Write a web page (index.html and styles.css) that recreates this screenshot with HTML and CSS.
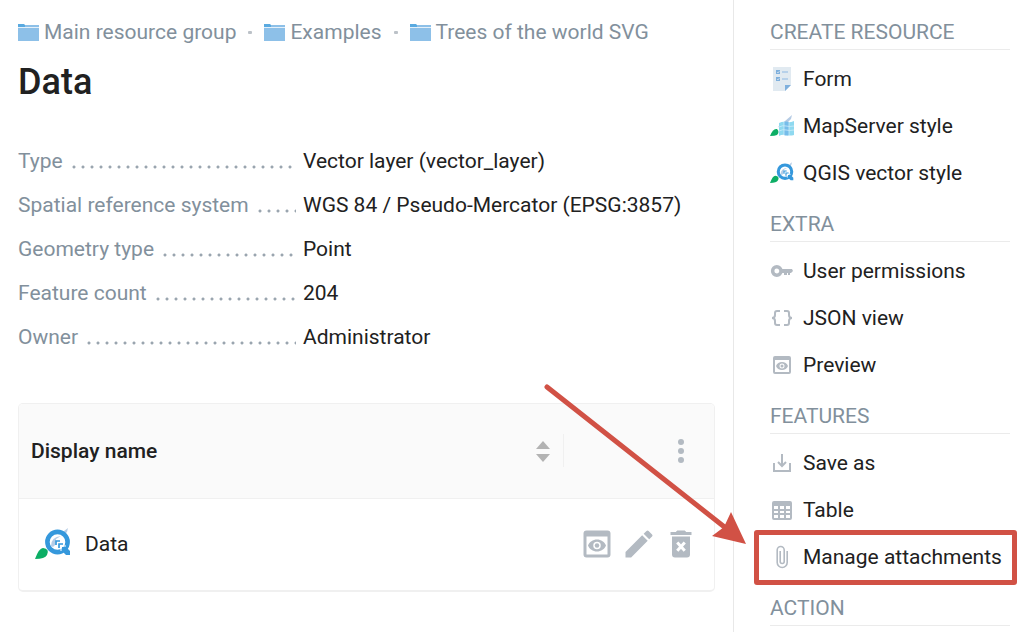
FILE: index.html
```html
<!DOCTYPE html>
<html lang="en">
<head>
<meta charset="utf-8">
<title>Data</title>
<link rel="stylesheet" href="styles.css">
</head>
<body>
<svg class="defs" aria-hidden="true">
  <symbol id="folder" viewBox="0 0 21 19">
    <path fill="#5aaae0" d="M0 1h6l1 1v3H0z"/>
    <path fill="#8dc0e8" d="M7 2h14v16H0V4h7z"/>
    <path fill="#e4f0fa" d="M0 4h21v1H0z"/>
  </symbol>
  <symbol id="form" viewBox="0 0 24 24">
    <path fill="#e1eaf1" d="M3 0h18v18l-6 6H3z"/>
    <path fill="#7fb0dd" d="M15 18h6l-6 6zM6 3h4v4H6zM6 10h4v4H6z"/>
    <path fill="#b7d1ea" d="M12 4h6v2h-6zM12 11h6v2h-6z"/>
    <path fill="none" stroke="#e1eaf1" stroke-width=".7" d="M7 5l1 1 1.500-2M7 12l1 1 1.500-2"/>
  </symbol>
  <symbol id="mapserver" viewBox="0 0 24 24">
    <path fill="#b5cbe4" d="M22 1l-1 4-9 9-4-1z"/>
    <path fill="#8fd9f0" d="M9 9q4-2 7-1 4 1 8-1v14q-4 1-8 0-4-1-7 1z"/>
    <path fill="#76bdea" d="M14 8q2-1 5 0v13q-3 1-5 0z"/>
    <path fill="none" stroke="#d5effa" stroke-width=".7" d="M14 8v13M19 8v14M9 13q4-2 7-1t8 0M9 17q4-2 7-1t8 0"/>
    <path fill="#0cae65" d="M0 22q3-8 7-7 3 3 0 6-2 1-7 1z"/>
  </symbol>
  <symbol id="qgis" viewBox="0 0 36 32">
    <path fill="#b7cde6" d="M29 3l4-3-1 4-2 2zM16 18q0-9 10-10l-5 3-1 6-2 2z"/>
    <circle cx="22.500" cy="14" r="10.100" fill="none" stroke="#3598dc" stroke-width="4.600"/>
    <path fill="none" stroke="#fff" stroke-width="1" d="M26 23v-5h5"/>
    <path fill="#3598dc" d="M27 19h4l4 4v4h-4l-4-4z"/>
    <path fill="none" stroke="#3598dc" stroke-width="1.700" d="M21 17v-4h4M24 20v-4h4"/>
    <path fill="#0cae65" d="M0 31q4-11 8-11 7 1 4 7-2 4-12 4z"/>
  </symbol>
  <symbol id="key" viewBox="0 0 24 24">
    <path fill="none" stroke="currentColor" stroke-width="3.500" d="M11 12a4.200 4.200 0 1 1-8.400 0a4.200 4.200 0 1 1 8.400 0z"/>
    <path fill="currentColor" d="M11 10h11l1 2-2 2h-1v2h-2v-2h-1v2h-3v-2h-3z"/>
  </symbol>
  <symbol id="braces" viewBox="0 0 24 24">
    <path fill="none" stroke="currentColor" stroke-width="2" d="M10 5H7Q5 5 5 7v2q0 3-3 3 3 0 3 3v2q0 2 2 2h3M14 5h3q2 0 2 2v2q0 3 3 3-3 0-3 3v2q0 2-2 2h-3"/>
  </symbol>
  <symbol id="preview" viewBox="0 0 24 24">
    <path fill="currentColor" fill-rule="evenodd" d="M19 3H5a2 2 0 0 0-2 2v14a2 2 0 0 0 2 2h14a2 2 0 0 0 2-2V5a2 2 0 0 0-2-2zm0 16H5V7h14z"/>
    <path fill="currentColor" fill-rule="evenodd" d="M12 9c-2.700 0-5.100 1.600-6 4 .9 2.400 3.300 4 6 4s5.100-1.600 6-4c-.9-2.400-3.300-4-6-4zm0 1.500a2.500 2.500 0 1 1 0 5 2.500 2.500 0 0 1 0-5z"/>
    <circle cx="12" cy="13" r="1.500" fill="currentColor"/>
  </symbol>
  <symbol id="save" viewBox="0 0 24 24">
    <path fill="none" stroke="currentColor" stroke-width="2" d="M4 12v8h16v-8M12 3v12M8 11l4 4 4-4"/>
  </symbol>
  <symbol id="table" viewBox="0 0 24 24">
    <path fill="currentColor" fill-rule="evenodd" d="M4 3h16q2 0 2 2v15q0 2-2 2H4q-2 0-2-2V5q0-2 2-2zM4 8v3h4V8zM10 8v3h4V8zM16 8v3h4V8zM4 13v2h4v-2zM10 13v2h4v-2zM16 13v2h4v-2zM4 17v3h4v-3zM10 17v3h4v-3zM16 17v3h4v-3z"/>
  </symbol>
  <symbol id="clip" viewBox="0 0 24 24">
    <path fill="none" stroke="currentColor" stroke-width="1.600" d="M17.200 6v11.500a5 5 0 0 1-10 0V5a3.500 3.500 0 0 1 7 0v11.500a2 2 0 0 1-4 0V6"/>
  </symbol>
  <symbol id="pencil" viewBox="0 0 24 24">
    <path fill="currentColor" d="M3 17.250V21h3.750L17.800 9.900l-3.700-3.700zM20.700 7a1 1 0 0 0 0-1.400l-2.300-2.300a1 1 0 0 0-1.400 0l-1.900 1.900 3.700 3.700z"/>
  </symbol>
  <symbol id="trash" viewBox="0 0 24 24">
    <path fill="currentColor" d="M6 19a2 2 0 0 0 2 2h8a2 2 0 0 0 2-2V7H6zM15.500 4l-1-1h-5l-1 1H5v2h14V4z"/>
    <path stroke="#fff" stroke-width="2" d="M9.500 11l5 5.500M14.500 11l-5 5.500"/>
  </symbol>
</svg>

<div class="page">
  <main class="content">
    <nav class="crumbs" aria-label="Breadcrumb">
      <a class="crumb" href="#"><svg class="folder"><use href="#folder"/></svg>Main resource group</a>
      <span class="dot"></span>
      <a class="crumb" href="#"><svg class="folder"><use href="#folder"/></svg>Examples</a>
      <span class="dot"></span>
      <a class="crumb" href="#"><svg class="folder"><use href="#folder"/></svg>Trees of the world SVG</a>
    </nav>
    <h1 class="title">Data</h1>

    <dl class="facts">
      <div class="fact"><dt class="label">Type</dt><dd class="value">Vector layer (vector_layer)</dd></div>
      <div class="fact"><dt class="label">Spatial reference system</dt><dd class="value">WGS 84 / Pseudo-Mercator (EPSG:3857)</dd></div>
      <div class="fact"><dt class="label">Geometry type</dt><dd class="value">Point</dd></div>
      <div class="fact"><dt class="label">Feature count</dt><dd class="value">204</dd></div>
      <div class="fact"><dt class="label">Owner</dt><dd class="value">Administrator</dd></div>
    </dl>

    <div class="card">
      <table class="children">
        <thead>
          <tr>
            <th class="name-head" scope="col">
              <div class="sorter">Display name
                <button class="icon-button" type="button" aria-label="Sort">
                  <svg class="sort-icon" viewBox="0 0 14 22"><path fill="#b3b3b3" d="M7 1l7 8H0zM7 22l7-8H0z"/></svg>
                </button>
              </div>
            </th>
            <th class="menu-head" scope="col">
              <button class="icon-button" type="button" aria-label="More">
                <svg class="more-icon" viewBox="0 0 32 32"><g fill="currentColor"><circle cx="16" cy="7" r="3"/><circle cx="16" cy="16" r="3"/><circle cx="16" cy="25" r="3"/></g></svg>
              </button>
            </th>
          </tr>
        </thead>
        <tbody>
          <tr>
            <td class="name-cell"><a class="resource" href="#"><svg class="resource-icon"><use href="#qgis"/></svg>Data</a></td>
            <td class="action-cell">
              <div class="actions">
                <a class="action" href="#" aria-label="Preview"><svg class="action-icon"><use href="#preview"/></svg></a>
                <a class="action" href="#" aria-label="Update"><svg class="action-icon"><use href="#pencil"/></svg></a>
                <a class="action" href="#" aria-label="Delete"><svg class="action-icon"><use href="#trash"/></svg></a>
              </div>
            </td>
          </tr>
        </tbody>
      </table>
    </div>
  </main>

  <aside class="sidebar">
    <h2 class="group">CREATE RESOURCE</h2>
    <ul class="menu">
      <li><a class="item" href="#"><svg class="item-icon"><use href="#form"/></svg>Form</a></li>
      <li><a class="item" href="#"><svg class="item-icon"><use href="#mapserver"/></svg>MapServer style</a></li>
      <li><a class="item" href="#"><svg class="item-icon"><use href="#qgis"/></svg>QGIS vector style</a></li>
    </ul>
    <h2 class="group">EXTRA</h2>
    <ul class="menu">
      <li><a class="item" href="#"><svg class="item-icon"><use href="#key"/></svg>User permissions</a></li>
      <li><a class="item" href="#"><svg class="item-icon"><use href="#braces"/></svg>JSON view</a></li>
      <li><a class="item" href="#"><svg class="item-icon"><use href="#preview"/></svg>Preview</a></li>
    </ul>
    <h2 class="group">FEATURES</h2>
    <ul class="menu">
      <li><a class="item" href="#"><svg class="item-icon"><use href="#save"/></svg>Save as</a></li>
      <li><a class="item" href="#"><svg class="item-icon"><use href="#table"/></svg>Table</a></li>
      <li class="marked">
        <a class="item" href="#"><svg class="item-icon"><use href="#clip"/></svg>Manage attachments</a>
        <svg class="arrow" viewBox="0 0 204 162" aria-hidden="true">
          <path stroke="#d15145" stroke-width="5" stroke-linecap="round" d="M4 3l180 142"/>
          <path fill="#d15145" d="M203 160l-34-8 12-9 7-15z"/>
        </svg>
      </li>
    </ul>
    <h2 class="group">ACTION</h2>
  </aside>
</div>
</body>
</html>
```
FILE: styles.css
```css
* {
  box-sizing: border-box;
}

body {
  margin: 0;
  background: #fff;
  color: #212121;
  font-family: Roboto, "Noto Sans", sans-serif;
  font-size: 21px;
  line-height: 26px;
}

a {
  color: inherit;
  text-decoration: none;
}

.defs {
  display: none;
}

.page {
  display: flex;
  min-height: 100vh;
}

.content {
  flex: 1;
  min-width: 0;
  padding: 19px 18px;
}

.crumbs {
  display: flex;
  align-items: center;
  color: #82909c;
}

.crumb {
  display: flex;
  align-items: center;
  gap: 5px;
  white-space: nowrap;
}

.folder {
  width: 21px;
  height: 19px;
}

.dot {
  width: 4px;
  height: 3px;
  margin: 0 12px;
  border-radius: 1px;
  background: #bcc2c8;
}

.title {
  margin: 13px 0 0;
  font-size: 36px;
  font-weight: 500;
  line-height: 48px;
}

.facts {
  display: grid;
  gap: 18px;
  margin: 42px 0 0;
}

.fact {
  display: flex;
}

.label {
  display: flex;
  flex: none;
  width: 278px;
  color: #82909c;
}

.label::after {
  content: "";
  flex: 1;
  margin-left: 6px;
  background: radial-gradient(circle at 5px 19px, #82909c 0, #a4aeb7 1px, transparent 2px) 0 0 / 9px 26px repeat-x;
}

.value {
  margin: 0 0 0 7px;
}

.card {
  margin-top: 53px;
  border: 1px solid #f0f0f0;
  border-bottom-width: 2px;
  border-radius: 5px;
  overflow: hidden;
}

.children {
  width: 100%;
  border-collapse: collapse;
}

.children th {
  height: 94px;
  padding: 0;
  border-bottom: 1px solid #f0f0f0;
  background: #fafafa;
  font-weight: 500;
  text-align: left;
}

.children td {
  height: 92px;
  padding: 0;
}

.sorter {
  display: flex;
  align-items: center;
  justify-content: space-between;
  height: 33px;
  padding: 0 13px 0 12px;
  border-right: 1px solid #f0f0f0;
}

.icon-button {
  display: flex;
  padding: 0;
  border: 0;
  background: none;
  color: #b3bac2;
}

.sort-icon {
  width: 14px;
  height: 22px;
}

.more-icon {
  width: 32px;
  height: 32px;
}

.menu-head {
  width: 150px;
}

.menu-head .icon-button {
  margin: 0 17px 0 auto;
}

.resource {
  display: flex;
  align-items: center;
  gap: 14px;
  padding-left: 16px;
}

.resource-icon {
  width: 36px;
  height: 32px;
}

.actions {
  display: flex;
  justify-content: flex-end;
  gap: 6px;
  padding-right: 15px;
}

.action {
  display: flex;
  color: #b3bac2;
}

.action-icon {
  width: 36px;
  height: 36px;
}

.sidebar {
  flex: none;
  width: 295px;
  padding: 4px 18px 0 36px;
  border-left: 1px solid #e8e8e8;
}

.group {
  margin: 0 0 5px;
  padding: 15px 0 4px;
  border-bottom: 1px solid #ebebeb;
  color: #82909c;
  font-size: 21px;
  font-weight: 400;
}

.menu {
  margin: 0;
  padding: 0;
  list-style: none;
}

.item {
  display: flex;
  align-items: center;
  gap: 9px;
  height: 47px;
  white-space: nowrap;
}

.item-icon {
  flex: none;
  width: 24px;
  height: 24px;
  color: #b3bac2;
}

.marked {
  position: relative;
}

.marked::after {
  content: "";
  position: absolute;
  inset: -3px -7px -5px -16px;
  border: 5px solid #d15145;
  border-radius: 3px;
}

.arrow {
  position: absolute;
  right: 263px;
  bottom: 34px;
  width: 204px;
  height: 162px;
}
```
